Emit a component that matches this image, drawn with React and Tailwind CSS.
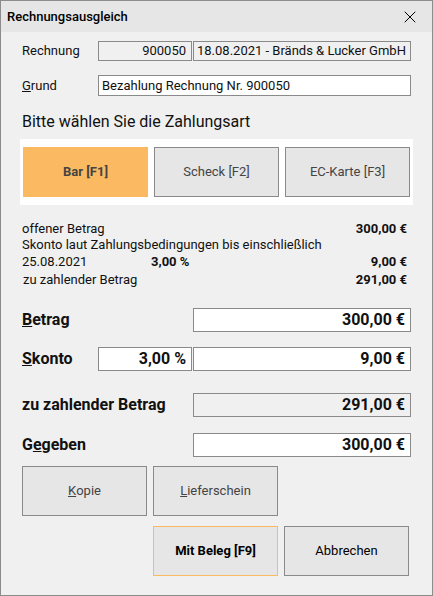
import { X } from "lucide-react";

const info = [
  { label: "offener Betrag", value: "300,00 €" },
];

function Field({ children, className = "", gray = false }) {
  return (
    <div
      className={`flex items-center justify-end border border-[#8a8a8a] pr-[5px] ${gray ? "bg-[#f0f0f0]" : "bg-white"} ${className}`}
    >
      {children}
    </div>
  );
}

function Btn({ children, className = "" }) {
  return (
    <button className={`w-[125px] h-[50px] flex items-center justify-center text-[13px] ${className}`}>
      {children}
    </button>
  );
}

export default function App() {
  return (
    <div
      className="w-[433px] h-[596px] border border-[#8c8c8c] bg-[#f0f0f0] flex flex-col text-[#111]"
      style={{ fontFamily: "Roboto, 'Noto Sans', sans-serif" }}
    >
      {/* title bar */}
      <div className="h-[31px] bg-[#e6e6e6] flex items-center justify-between pl-[6px] pr-[12px] shrink-0">
        <span className="text-[13px] font-medium text-black">Rechnungsausgleich</span>
        <X className="w-[20px] h-[20px] text-black" strokeWidth={1.2} />
      </div>

      <div className="flex flex-col px-[21px]">
        {/* Rechnung */}
        <div className="flex items-center mt-[9px] h-[20px] text-[13px]">
          <span className="w-[76px]">Rechnung</span>
          <Field gray className="w-[94px] h-[20px] pr-[3px]">900050</Field>
          <div className="flex-1 ml-[1px] h-[20px] border border-[#8a8a8a] bg-[#f0f0f0] flex items-center pl-[3px]">
            18.08.2021 - Bränds &amp; Lucker GmbH
          </div>
        </div>

        {/* Grund */}
        <div className="flex items-center mt-[14px] h-[21px] text-[13px]">
          <span className="w-[76px]"><u>G</u>rund</span>
          <div className="flex-1 h-[21px] border border-[#8a8a8a] bg-white flex items-center pl-[3px]">
            Bezahlung Rechnung Nr. 900050
          </div>
        </div>

        <div className="mt-[16px] h-[20px] leading-[20px] text-[16px]">Bitte wählen Sie die Zahlungsart</div>

        {/* Zahlungsart */}
        <div className="mt-[7px] -mx-[2px] bg-white flex gap-[6px] px-[3px] py-[8px]">
          <Btn className="bg-[#fbba62] font-bold text-[#444]">Bar [F1]</Btn>
          <Btn className="bg-[#e6e6e6] border border-[#8a8a8a] text-[#444]">Scheck [F2]</Btn>
          <Btn className="bg-[#e6e6e6] border border-[#8a8a8a] text-[#444]">EC-Karte [F3]</Btn>
        </div>

        {/* info */}
        <div className="mt-[15px] flex flex-col text-[13px] leading-[17px] pr-[4px]">
          {info.map((r) => (
            <div key={r.label} className="flex justify-between h-[16px]">
              <span>{r.label}</span>
              <span className="font-bold">{r.value}</span>
            </div>
          ))}
          <div className="h-[17px]">Skonto laut Zahlungsbedingungen bis einschließlich</div>
          <div className="flex h-[17px]">
            <span className="w-[129px]">25.08.2021</span>
            <span className="font-bold">3,00 %</span>
            <span className="ml-auto font-bold">9,00 €</span>
          </div>
          <div className="flex justify-between h-[17px] mt-[1px] pl-[1px]">
            <span>zu zahlender Betrag</span>
            <span className="font-bold">291,00 €</span>
          </div>
        </div>

        {/* Betrag */}
        <div className="flex items-center mt-[20px] h-[24px] text-[16px] font-bold">
          <span className="w-[171px]"><u>B</u>etrag</span>
          <Field className="flex-1 h-[24px]">300,00 €</Field>
        </div>

        <div className="flex items-center mt-[15px] h-[24px] text-[16px] font-bold">
          <span className="w-[76px]"><u>S</u>konto</span>
          <Field className="w-[94px] h-[24px] pr-[3px]">3,00 %</Field>
          <Field className="flex-1 ml-[1px] h-[24px]">9,00 €</Field>
        </div>

        <div className="flex items-center mt-[22px] h-[24px] text-[16px] font-bold">
          <span className="w-[171px]">zu zahlender Betrag</span>
          <Field gray className="flex-1 h-[24px]">291,00 €</Field>
        </div>

        <div className="flex items-center mt-[16px] h-[24px] text-[16px] font-bold">
          <span className="w-[171px]">G<u>e</u>geben</span>
          <Field className="flex-1 h-[24px]">300,00 €</Field>
        </div>

        {/* buttons */}
        <div className="flex gap-[6px] mt-[9px]">
          <Btn className="bg-[#e6e6e6] border border-[#8a8a8a] text-[#444]"><u>K</u>opie</Btn>
          <Btn className="bg-[#e6e6e6] border border-[#8a8a8a] text-[#444]"><u>L</u>ieferschein</Btn>
        </div>
        <div className="flex gap-[6px] mt-[10px] pl-[131px]">
          <Btn className="bg-[#e6e6e6] border border-[#fbba62] font-bold text-black">Mit Beleg [F9]</Btn>
          <Btn className="bg-[#e6e6e6] border border-[#8a8a8a] text-black">Abbrechen</Btn>
        </div>
      </div>
    </div>
  );
}
